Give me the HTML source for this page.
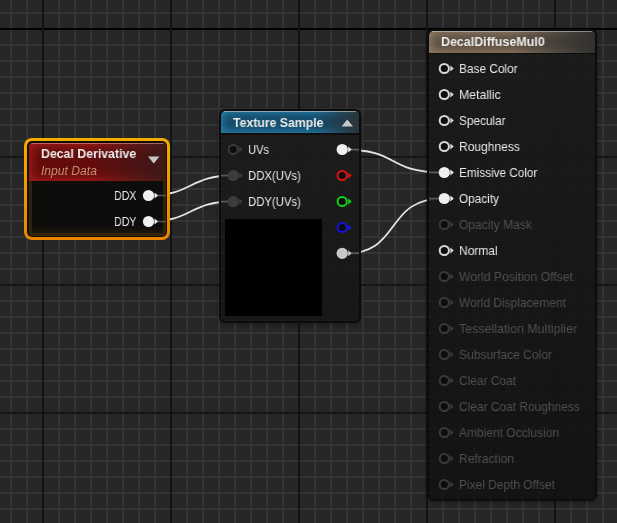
<!DOCTYPE html><html><head><meta charset="utf-8"><style>
html,body{margin:0;padding:0;width:617px;height:523px;overflow:hidden;background:#262626;}
body{position:relative;font-family:"Liberation Sans",sans-serif;}
.abs{position:absolute;}
svg{position:absolute;left:0;top:0;}
.t{position:absolute;white-space:nowrap;font-size:13px;line-height:13px;transform-origin:0 0;will-change:transform;}
.node{position:absolute;box-sizing:border-box;}

</style></head><body>
<svg width="617" height="523" viewBox="0 0 617 523" shape-rendering="crispEdges"><rect x="10" y="0" width="2" height="523" fill="#343434"/><rect x="26" y="0" width="2" height="523" fill="#343434"/><rect x="42" y="0" width="2" height="523" fill="#343434"/><rect x="58" y="0" width="2" height="523" fill="#343434"/><rect x="74" y="0" width="2" height="523" fill="#343434"/><rect x="90" y="0" width="2" height="523" fill="#343434"/><rect x="106" y="0" width="2" height="523" fill="#343434"/><rect x="122" y="0" width="2" height="523" fill="#343434"/><rect x="138" y="0" width="2" height="523" fill="#343434"/><rect x="154" y="0" width="2" height="523" fill="#343434"/><rect x="170" y="0" width="2" height="523" fill="#343434"/><rect x="186" y="0" width="2" height="523" fill="#343434"/><rect x="202" y="0" width="2" height="523" fill="#343434"/><rect x="218" y="0" width="2" height="523" fill="#343434"/><rect x="234" y="0" width="2" height="523" fill="#343434"/><rect x="250" y="0" width="2" height="523" fill="#343434"/><rect x="266" y="0" width="2" height="523" fill="#343434"/><rect x="282" y="0" width="2" height="523" fill="#343434"/><rect x="298" y="0" width="2" height="523" fill="#343434"/><rect x="314" y="0" width="2" height="523" fill="#343434"/><rect x="330" y="0" width="2" height="523" fill="#343434"/><rect x="346" y="0" width="2" height="523" fill="#343434"/><rect x="362" y="0" width="2" height="523" fill="#343434"/><rect x="378" y="0" width="2" height="523" fill="#343434"/><rect x="394" y="0" width="2" height="523" fill="#343434"/><rect x="410" y="0" width="2" height="523" fill="#343434"/><rect x="426" y="0" width="2" height="523" fill="#343434"/><rect x="442" y="0" width="2" height="523" fill="#343434"/><rect x="458" y="0" width="2" height="523" fill="#343434"/><rect x="474" y="0" width="2" height="523" fill="#343434"/><rect x="490" y="0" width="2" height="523" fill="#343434"/><rect x="506" y="0" width="2" height="523" fill="#343434"/><rect x="522" y="0" width="2" height="523" fill="#343434"/><rect x="538" y="0" width="2" height="523" fill="#343434"/><rect x="554" y="0" width="2" height="523" fill="#343434"/><rect x="570" y="0" width="2" height="523" fill="#343434"/><rect x="586" y="0" width="2" height="523" fill="#343434"/><rect x="602" y="0" width="2" height="523" fill="#343434"/><rect x="0" y="12" width="617" height="2" fill="#343434"/><rect x="0" y="44" width="617" height="2" fill="#343434"/><rect x="0" y="60" width="617" height="2" fill="#343434"/><rect x="0" y="76" width="617" height="2" fill="#343434"/><rect x="0" y="92" width="617" height="2" fill="#343434"/><rect x="0" y="108" width="617" height="2" fill="#343434"/><rect x="0" y="124" width="617" height="2" fill="#343434"/><rect x="0" y="140" width="617" height="2" fill="#343434"/><rect x="0" y="172" width="617" height="2" fill="#343434"/><rect x="0" y="188" width="617" height="2" fill="#343434"/><rect x="0" y="204" width="617" height="2" fill="#343434"/><rect x="0" y="220" width="617" height="2" fill="#343434"/><rect x="0" y="236" width="617" height="2" fill="#343434"/><rect x="0" y="252" width="617" height="2" fill="#343434"/><rect x="0" y="268" width="617" height="2" fill="#343434"/><rect x="0" y="300" width="617" height="2" fill="#343434"/><rect x="0" y="316" width="617" height="2" fill="#343434"/><rect x="0" y="332" width="617" height="2" fill="#343434"/><rect x="0" y="348" width="617" height="2" fill="#343434"/><rect x="0" y="364" width="617" height="2" fill="#343434"/><rect x="0" y="380" width="617" height="2" fill="#343434"/><rect x="0" y="396" width="617" height="2" fill="#343434"/><rect x="0" y="428" width="617" height="2" fill="#343434"/><rect x="0" y="444" width="617" height="2" fill="#343434"/><rect x="0" y="460" width="617" height="2" fill="#343434"/><rect x="0" y="476" width="617" height="2" fill="#343434"/><rect x="0" y="492" width="617" height="2" fill="#343434"/><rect x="0" y="508" width="617" height="2" fill="#343434"/><rect x="0" y="156" width="617" height="2" fill="#161616"/><rect x="0" y="284" width="617" height="2" fill="#161616"/><rect x="0" y="412" width="617" height="2" fill="#161616"/><rect x="0" y="28" width="617" height="2" fill="#000"/><rect x="42" y="0" width="2" height="523" fill="#131313"/><rect x="170" y="0" width="2" height="523" fill="#131313"/><rect x="298" y="0" width="2" height="523" fill="#131313"/><rect x="426" y="0" width="2" height="523" fill="#131313"/><rect x="554" y="0" width="2" height="523" fill="#131313"/></svg>
<svg width="617" height="523"><path d="M148.5 195.5 C192.5 195.5 189 175.5 233 175.5" fill="none" stroke="#e4e4e4" stroke-width="1.8"/><path d="M148.5 221.5 C192.5 221.5 189 201.5 233 201.5" fill="none" stroke="#e4e4e4" stroke-width="1.8"/><path d="M342 149.5 C402 149.5 384.3 172.4 444.3 172.4" fill="none" stroke="#e4e4e4" stroke-width="1.8"/><path d="M342 254.2 C404 254.2 382.3 198.4 444.3 198.4" fill="none" stroke="#e4e4e4" stroke-width="1.8"/></svg>
<div class="node" style="left:24px;top:138px;width:146px;height:102px;border-radius:8px;background:linear-gradient(to bottom,#f6ac00,#e98400);"></div>
<div class="node" style="left:27px;top:141px;width:140px;height:96px;border-radius:5px;background:#110d07;"></div>
<div class="node" style="left:29px;top:143px;width:137px;height:93px;border-radius:4px;background:rgba(14,14,14,0.88);box-shadow:inset 0 0 0 3px rgba(66,46,12,0.6),inset 0 -6px 6px rgba(70,48,10,0.35);overflow:hidden;"><div class="abs" style="left:0;top:0;width:137px;height:37.5px;border-radius:4px 4px 0 0;overflow:hidden;background:#640c0c;box-shadow:inset 0 0 12px 1px #b8201c;"><div class="abs" style="left:0;top:0;width:137px;height:37.5px;background:linear-gradient(to right,rgba(0,0,0,0) 45%,rgba(56,26,26,0.9) 100%);"></div><div class="abs" style="left:0;top:0;width:137px;height:1px;background:rgba(230,150,150,0.6);"></div></div></div>
<div class="t" style="left:41.4px;top:146.70px;font-size:13px;line-height:13px;color:#ececec;font-weight:700;font-style:normal;transform:scaleX(0.9477);">Decal Derivative</div>
<div class="t" style="left:41.4px;top:164.74px;font-size:12px;line-height:12px;color:#c4926e;font-weight:400;font-style:italic;transform:scaleX(1.0092);">Input Data</div>
<svg width="617" height="523"><path d="M148 156.5 L159.5 156.5 L153.75 163.5 Z" fill="#c8c8c8"/><path d="M156 195.5 H166 M156 221.5 H166" stroke="#555" stroke-width="1.4"/><circle cx="148.5" cy="195.5" r="5.6" fill="#f0f0f0"/><path d="M154.5 192.5 L158.0 195.5 L154.5 198.5 Z" fill="#f0f0f0"/><circle cx="148.5" cy="221.5" r="5.6" fill="#f0f0f0"/><path d="M154.5 218.5 L158.0 221.5 L154.5 224.5 Z" fill="#f0f0f0"/></svg>
<div class="t" style="left:114.2px;top:189.05px;font-size:13px;line-height:13px;color:#e8e8e8;font-weight:400;font-style:normal;transform:scaleX(0.8160);">DDX</div>
<div class="t" style="left:114.2px;top:214.90px;font-size:13px;line-height:13px;color:#e8e8e8;font-weight:400;font-style:normal;transform:scaleX(0.8160);">DDY</div>
<div class="node" style="left:219px;top:109px;width:142px;height:214px;box-shadow:0 1px 4px rgba(0,0,0,0.35);border:2px solid #0c0c0c;border-radius:6px;background:linear-gradient(to bottom,rgba(28,29,27,0.9),rgba(22,23,21,0.9));overflow:hidden;"><div class="abs" style="left:0;top:0;width:138px;height:22px;border-radius:5px 5px 0 0;overflow:hidden;background:#154c6a;box-shadow:inset 0 0 8px 1px #2888ba;"><div class="abs" style="left:0;top:0;width:138px;height:22px;background:linear-gradient(to right,rgba(0,0,0,0) 68%,rgba(44,48,52,0.95) 100%);"></div><div class="abs" style="left:0;top:0;width:138px;height:1px;background:rgba(210,210,210,0.6);"></div></div><div class="abs" style="left:0;top:22px;width:138px;height:1.5px;background:#0e0e0e;"></div></div>
<div class="t" style="left:233.2px;top:115.90px;font-size:13px;line-height:13px;color:#ececec;font-weight:700;font-style:normal;transform:scaleX(0.9441);">Texture Sample</div>
<div class="abs" style="left:225px;top:219px;width:97px;height:97px;background:#000;"></div>
<svg width="617" height="523"><path d="M341.5 126.5 L353 126.5 L347.25 119.5 Z" fill="#c8c8c8"/><path d="M221 175.5 H228 M221 201.5 H228 M351 149.5 H359 M351 253.3 H359" stroke="#5a5a5a" stroke-width="1.4"/><circle cx="233.2" cy="149.5" r="4.6" fill="#0d0d0d" stroke="#3a3a3a" stroke-width="2"/><path d="M239.2 146.5 L242.7 149.5 L239.2 152.5 Z" fill="#3a3a3a"/><circle cx="233.2" cy="175.5" r="5.6" fill="#3c3c3c"/><path d="M239.2 172.5 L242.7 175.5 L239.2 178.5 Z" fill="#3c3c3c"/><circle cx="233.2" cy="201.5" r="5.6" fill="#3c3c3c"/><path d="M239.2 198.5 L242.7 201.5 L239.2 204.5 Z" fill="#3c3c3c"/><circle cx="342.2" cy="149.5" r="5.6" fill="#f0f0f0"/><path d="M348.2 146.5 L351.7 149.5 L348.2 152.5 Z" fill="#f0f0f0"/><circle cx="342.2" cy="175.5" r="4.6" fill="#0d0d0d" stroke="#e01414" stroke-width="2"/><path d="M348.2 172.5 L351.7 175.5 L348.2 178.5 Z" fill="#e01414"/><circle cx="342.2" cy="201.5" r="4.6" fill="#0d0d0d" stroke="#14d014" stroke-width="2"/><path d="M348.2 198.5 L351.7 201.5 L348.2 204.5 Z" fill="#14d014"/><circle cx="342.2" cy="227.5" r="4.6" fill="#0d0d0d" stroke="#1414e0" stroke-width="2"/><path d="M348.2 224.5 L351.7 227.5 L348.2 230.5 Z" fill="#1414e0"/><circle cx="342.2" cy="253.3" r="5.6" fill="#c8c8c8"/><path d="M348.2 250.3 L351.7 253.3 L348.2 256.3 Z" fill="#c8c8c8"/></svg>
<div class="t" style="left:247.8px;top:142.80px;font-size:13px;line-height:13px;color:#e8e8e8;font-weight:400;font-style:normal;transform:scaleX(0.8550);">UVs</div>
<div class="t" style="left:247.8px;top:168.90px;font-size:13px;line-height:13px;color:#e8e8e8;font-weight:400;font-style:normal;transform:scaleX(0.8719);">DDX(UVs)</div>
<div class="t" style="left:247.8px;top:194.90px;font-size:13px;line-height:13px;color:#e8e8e8;font-weight:400;font-style:normal;transform:scaleX(0.8719);">DDY(UVs)</div>
<div class="node" style="left:427px;top:29px;width:170px;height:472px;box-shadow:0 1px 4px rgba(0,0,0,0.35);border:2px solid #0c0c0c;border-radius:6px;background:linear-gradient(to bottom,rgba(26,27,25,0.88),rgba(17,18,16,0.88));overflow:hidden;"><div class="abs" style="left:0;top:0;width:166px;height:22px;border-radius:5px 5px 0 0;overflow:hidden;background:#5c4e40;box-shadow:inset 0 0 11px 1px #9c8870;"><div class="abs" style="left:0;top:0;width:166px;height:22px;background:linear-gradient(to right,rgba(0,0,0,0) 50%,rgba(48,48,48,1) 100%);"></div><div class="abs" style="left:0;top:0;width:166px;height:1px;background:rgba(220,220,220,0.5);"></div></div><div class="abs" style="left:0;top:22px;width:166px;height:1px;background:#0e0e0e;"></div></div>
<div class="t" style="left:441.3px;top:35.30px;font-size:13px;line-height:13px;color:#ececec;font-weight:700;font-style:normal;transform:scaleX(0.9568);">DecalDiffuseMul0</div>
<div class="t" style="left:459.3px;top:62.10px;font-size:13px;line-height:13px;color:#e8e8e8;font-weight:400;font-style:normal;transform:scaleX(0.9112);">Base Color</div>
<div class="t" style="left:459.3px;top:88.10px;font-size:13px;line-height:13px;color:#e8e8e8;font-weight:400;font-style:normal;transform:scaleX(0.9460);">Metallic</div>
<div class="t" style="left:459.3px;top:114.10px;font-size:13px;line-height:13px;color:#e8e8e8;font-weight:400;font-style:normal;transform:scaleX(0.9063);">Specular</div>
<div class="t" style="left:459.3px;top:140.10px;font-size:13px;line-height:13px;color:#e8e8e8;font-weight:400;font-style:normal;transform:scaleX(0.9258);">Roughness</div>
<div class="t" style="left:459.3px;top:166.10px;font-size:13px;line-height:13px;color:#e8e8e8;font-weight:400;font-style:normal;transform:scaleX(0.9044);">Emissive Color</div>
<div class="t" style="left:459.3px;top:192.10px;font-size:13px;line-height:13px;color:#e8e8e8;font-weight:400;font-style:normal;transform:scaleX(0.9074);">Opacity</div>
<div class="t" style="left:459.3px;top:218.10px;font-size:13px;line-height:13px;color:#4f4f4f;font-weight:400;font-style:normal;transform:scaleX(0.9257);">Opacity Mask</div>
<div class="t" style="left:459.3px;top:244.10px;font-size:13px;line-height:13px;color:#e8e8e8;font-weight:400;font-style:normal;transform:scaleX(0.9210);">Normal</div>
<div class="t" style="left:459.3px;top:270.10px;font-size:13px;line-height:13px;color:#4f4f4f;font-weight:400;font-style:normal;transform:scaleX(0.9364);">World Position Offset</div>
<div class="t" style="left:459.3px;top:296.10px;font-size:13px;line-height:13px;color:#4f4f4f;font-weight:400;font-style:normal;transform:scaleX(0.9208);">World Displacement</div>
<div class="t" style="left:459.3px;top:322.10px;font-size:13px;line-height:13px;color:#4f4f4f;font-weight:400;font-style:normal;transform:scaleX(0.9558);">Tessellation Multiplier</div>
<div class="t" style="left:459.3px;top:348.10px;font-size:13px;line-height:13px;color:#4f4f4f;font-weight:400;font-style:normal;transform:scaleX(0.9248);">Subsurface Color</div>
<div class="t" style="left:459.3px;top:374.10px;font-size:13px;line-height:13px;color:#4f4f4f;font-weight:400;font-style:normal;transform:scaleX(0.9189);">Clear Coat</div>
<div class="t" style="left:459.3px;top:400.10px;font-size:13px;line-height:13px;color:#4f4f4f;font-weight:400;font-style:normal;transform:scaleX(0.9184);">Clear Coat Roughness</div>
<div class="t" style="left:459.3px;top:426.10px;font-size:13px;line-height:13px;color:#4f4f4f;font-weight:400;font-style:normal;transform:scaleX(0.9226);">Ambient Occlusion</div>
<div class="t" style="left:459.3px;top:452.10px;font-size:13px;line-height:13px;color:#4f4f4f;font-weight:400;font-style:normal;transform:scaleX(0.9283);">Refraction</div>
<div class="t" style="left:459.3px;top:478.10px;font-size:13px;line-height:13px;color:#4f4f4f;font-weight:400;font-style:normal;transform:scaleX(0.9173);">Pixel Depth Offset</div>
<svg width="617" height="523"><path d="M429 172.5 H439 M429 198.5 H439" stroke="#5a5a5a" stroke-width="1.4"/><circle cx="444.3" cy="68.5" r="4.6" fill="#0d0d0d" stroke="#d8d8d8" stroke-width="2"/><path d="M450.3 65.5 L453.8 68.5 L450.3 71.5 Z" fill="#d8d8d8"/><circle cx="444.3" cy="94.5" r="4.6" fill="#0d0d0d" stroke="#d8d8d8" stroke-width="2"/><path d="M450.3 91.5 L453.8 94.5 L450.3 97.5 Z" fill="#d8d8d8"/><circle cx="444.3" cy="120.5" r="4.6" fill="#0d0d0d" stroke="#d8d8d8" stroke-width="2"/><path d="M450.3 117.5 L453.8 120.5 L450.3 123.5 Z" fill="#d8d8d8"/><circle cx="444.3" cy="146.5" r="4.6" fill="#0d0d0d" stroke="#d8d8d8" stroke-width="2"/><path d="M450.3 143.5 L453.8 146.5 L450.3 149.5 Z" fill="#d8d8d8"/><circle cx="444.3" cy="172.5" r="5.6" fill="#f0f0f0"/><path d="M450.3 169.5 L453.8 172.5 L450.3 175.5 Z" fill="#f0f0f0"/><circle cx="444.3" cy="198.5" r="5.6" fill="#f0f0f0"/><path d="M450.3 195.5 L453.8 198.5 L450.3 201.5 Z" fill="#f0f0f0"/><circle cx="444.3" cy="224.5" r="4.6" fill="#0d0d0d" stroke="#3a3a3a" stroke-width="2"/><path d="M450.3 221.5 L453.8 224.5 L450.3 227.5 Z" fill="#3a3a3a"/><circle cx="444.3" cy="250.5" r="4.6" fill="#0d0d0d" stroke="#d8d8d8" stroke-width="2"/><path d="M450.3 247.5 L453.8 250.5 L450.3 253.5 Z" fill="#d8d8d8"/><circle cx="444.3" cy="276.5" r="4.6" fill="#0d0d0d" stroke="#3a3a3a" stroke-width="2"/><path d="M450.3 273.5 L453.8 276.5 L450.3 279.5 Z" fill="#3a3a3a"/><circle cx="444.3" cy="302.5" r="4.6" fill="#0d0d0d" stroke="#3a3a3a" stroke-width="2"/><path d="M450.3 299.5 L453.8 302.5 L450.3 305.5 Z" fill="#3a3a3a"/><circle cx="444.3" cy="328.5" r="4.6" fill="#0d0d0d" stroke="#3a3a3a" stroke-width="2"/><path d="M450.3 325.5 L453.8 328.5 L450.3 331.5 Z" fill="#3a3a3a"/><circle cx="444.3" cy="354.5" r="4.6" fill="#0d0d0d" stroke="#3a3a3a" stroke-width="2"/><path d="M450.3 351.5 L453.8 354.5 L450.3 357.5 Z" fill="#3a3a3a"/><circle cx="444.3" cy="380.5" r="4.6" fill="#0d0d0d" stroke="#3a3a3a" stroke-width="2"/><path d="M450.3 377.5 L453.8 380.5 L450.3 383.5 Z" fill="#3a3a3a"/><circle cx="444.3" cy="406.5" r="4.6" fill="#0d0d0d" stroke="#3a3a3a" stroke-width="2"/><path d="M450.3 403.5 L453.8 406.5 L450.3 409.5 Z" fill="#3a3a3a"/><circle cx="444.3" cy="432.5" r="4.6" fill="#0d0d0d" stroke="#3a3a3a" stroke-width="2"/><path d="M450.3 429.5 L453.8 432.5 L450.3 435.5 Z" fill="#3a3a3a"/><circle cx="444.3" cy="458.5" r="4.6" fill="#0d0d0d" stroke="#3a3a3a" stroke-width="2"/><path d="M450.3 455.5 L453.8 458.5 L450.3 461.5 Z" fill="#3a3a3a"/><circle cx="444.3" cy="484.5" r="4.6" fill="#0d0d0d" stroke="#3a3a3a" stroke-width="2"/><path d="M450.3 481.5 L453.8 484.5 L450.3 487.5 Z" fill="#3a3a3a"/></svg>
</body></html>
